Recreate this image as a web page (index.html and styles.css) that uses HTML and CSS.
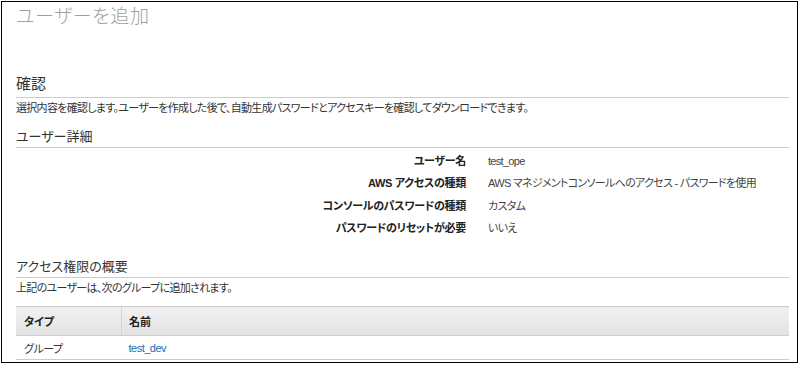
FILE: index.html
```html
<!DOCTYPE html>
<html lang="ja">
<head>
    <meta charset="UTF-8">
    <meta name="viewport" content="width=device-width, initial-scale=1.0">
    <title>ユーザーを追加</title>
    <link rel="stylesheet" href="styles.css">
</head>
<body>
    <div class="frame">
        <h1 class="page-title">ユーザーを追加</h1>

        <h2 class="step-title">確認</h2>
        <p class="note">選択内容を確認します。ユーザーを作成した後で、自動生成パスワードとアクセスキーを確認してダウンロードできます。</p>

        <h3 class="section-title">ユーザー詳細</h3>
        <div class="details">
            <div class="label">ユーザー名</div>
            <div class="value">test_ope</div>

            <div class="label">AWS アクセスの種類</div>
            <div class="value">AWS マネジメントコンソールへのアクセス - パスワードを使用</div>

            <div class="label">コンソールのパスワードの種類</div>
            <div class="value">カスタム</div>

            <div class="label">パスワードのリセットが必要</div>
            <div class="value">いいえ</div>
        </div>

        <h3 class="section-title perms">アクセス権限の概要</h3>
        <p class="note">上記のユーザーは、次のグループに追加されます。</p>

        <table class="summary">
            <thead>
                <tr>
                    <th class="col-type">タイプ</th>
                    <th>名前</th>
                </tr>
            </thead>
            <tbody>
                <tr>
                    <td>グループ</td>
                    <td><a href="#">test_dev</a></td>
                </tr>
            </tbody>
        </table>
    </div>
</body>
</html>
```

FILE: styles.css
```css
body {
    margin: 0;
    background: #ffffff;
    font-family: "Liberation Sans", "Noto Sans CJK JP", sans-serif;
    color: #333333;
    font-size: 11px;
}
.frame {
    margin: 1px 0 0 1px;
    width: 797px;
    height: 362px;
    border: 1px solid #000000;
    padding: 0 8px 0 14px;
    box-sizing: border-box;
    font-feature-settings: "palt";
}
.page-title {
    margin: 1px 0 0 0;
    font-size: 19px;
    line-height: 28px;
    font-weight: 300;
    letter-spacing: 0.6px;
    color: #a0a0a0;
}
.step-title {
    margin: 43px 0 0 0;
    font-size: 15px;
    line-height: 20px;
    font-weight: normal;
    padding-bottom: 3px;
    border-bottom: 1px solid #cccccc;
}
.note {
    margin: 2px 0 0 0;
    line-height: 16px;
    letter-spacing: -0.7px;
}
.section-title {
    margin: 12px 0 0 0;
    font-size: 13px;
    line-height: 18px;
    font-weight: normal;
    padding-bottom: 1px;
    border-bottom: 1px solid #cccccc;
}
.section-title.perms {
    margin-top: 19px;
}
.details {
    display: grid;
    grid-template-columns: 450px 1fr;
    grid-auto-rows: 22.3px;
    column-gap: 22px;
    margin-top: 2px;
    line-height: 22px;
}
.label {
    text-align: right;
    font-weight: bold;
    color: #222222;
    letter-spacing: -0.3px;
}
.value {
    color: #444444;
    letter-spacing: -0.7px;
}
.summary {
    width: 100%;
    margin-top: 10px;
    border-collapse: collapse;
}
.summary th {
    height: 28px;
    padding: 0 7px;
    text-align: left;
    font-weight: bold;
    color: #222222;
    background: linear-gradient(#f1f1f1, #e2e2e2);
    border-top: 1px solid #cccccc;
    border-bottom: 1px solid #cccccc;
    border-left: 1px solid #d4d4d4;
}
.summary th.col-type {
    width: 90px;
    padding-left: 8px;
    border-left: none;
}
.summary td {
    height: 23px;
    padding: 0 7px 0 8px;
    border-bottom: 1px solid #cccccc;
    letter-spacing: -0.5px;
}
.summary td + td {
    padding-left: 7px;
}
.summary a {
    color: #146eb4;
    text-decoration: none;
}
```
